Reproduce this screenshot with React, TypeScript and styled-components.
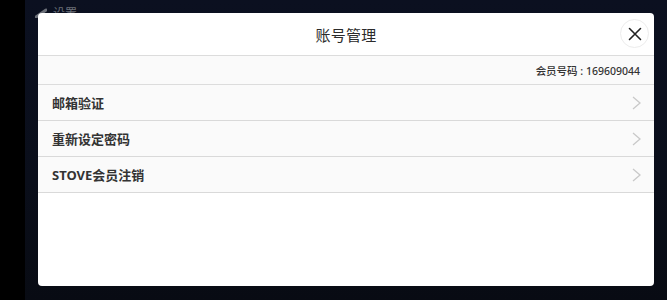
import React from 'react';
import styled, { createGlobalStyle } from 'styled-components';

const GlobalStyle = createGlobalStyle`
  html, body {
    margin: 0;
    padding: 0;
    background: #000;
  }
  body {
    font-family: "Noto Sans", "Noto Sans CJK SC", sans-serif;
  }
`;

const menuItems = ['邮箱验证', '重新设定密码', 'STOVE会员注销'];

const CloseIcon = () => (
    <svg width="14" height="14" viewBox="0 0 14 14">
        <path d="M1.5 1.5 L12.5 12.5 M12.5 1.5 L1.5 12.5" stroke="#222" strokeWidth="1.6" strokeLinecap="round" />
    </svg>
);

const Chevron = () => (
    <svg width="9" height="14" viewBox="0 0 9 14">
        <path d="M1 1 L8 7 L1 13" fill="none" stroke="#c9c9c9" strokeWidth="1.3" />
    </svg>
);

const BackIcon = () => (
    <svg width="12" height="10" viewBox="0 0 12 10">
        <path d="M1 9 L11 2" stroke="#6b6f78" strokeWidth="3" strokeLinecap="round" />
    </svg>
);

export default function App() {
    return (
        <Screen>
            <GlobalStyle />
            <SideStrip />
            <Stage>
                <BackBar>
                    <BackIcon />
                    <BackLabel>设置</BackLabel>
                </BackBar>
                <Dialog>
                    <DialogHeader>
                        <Title>账号管理</Title>
                        <CloseButton aria-label="close">
                            <CloseIcon />
                        </CloseButton>
                    </DialogHeader>
                    <MemberRow>会员号码 : 169609044</MemberRow>
                    {menuItems.map((item) => (
                        <MenuRow key={item}>
                            <MenuLabel>{item}</MenuLabel>
                            <Chevron />
                        </MenuRow>
                    ))}
                </Dialog>
            </Stage>
        </Screen>
    );
}

const Screen = styled.div`
  display: flex;
  width: 667px;
  height: 300px;
  overflow: hidden;
`;

const SideStrip = styled.div`
  width: 25px;
  flex-shrink: 0;
  background: #000;
`;

const Stage = styled.div`
  position: relative;
  flex: 1;
  background: linear-gradient(180deg, #0b1020 0%, #0a0e1a 60%, #080b13 100%);
`;

const BackBar = styled.div`
  display: flex;
  align-items: center;
  gap: 6px;
  padding: 4px 0 0 10px;
`;

const BackLabel = styled.span`
  font-size: 12px;
  color: #6b6f78;
`;

const Dialog = styled.div`
  position: absolute;
  top: 13px;
  left: 13px;
  width: 616px;
  height: 273px;
  background: #fff;
  border-radius: 4px;
  overflow: hidden;
  display: flex;
  flex-direction: column;
`;

const DialogHeader = styled.div`
  position: relative;
  height: 42px;
  display: flex;
  align-items: center;
  justify-content: center;
  border-bottom: 1px solid #dcdcdc;
`;

const Title = styled.h1`
  margin: 0;
  font-size: 15px;
  font-weight: 400;
  color: #2b2b2b;
  letter-spacing: 0.3px;
`;

const CloseButton = styled.button`
  position: absolute;
  right: 5px;
  top: 6px;
  width: 29px;
  height: 29px;
  border-radius: 50%;
  border: 1px solid #ececec;
  background: #fff;
  padding: 0;
  display: flex;
  align-items: center;
  justify-content: center;
`;

const MemberRow = styled.div`
  height: 28px;
  display: flex;
  align-items: center;
  justify-content: flex-end;
  padding: 0 14px;
  background: #fafafa;
  border-bottom: 1px solid #dcdcdc;
  font-size: 10.5px;
  font-weight: 500;
  color: #333;
`;

const MenuRow = styled.div`
  height: 35px;
  display: flex;
  align-items: center;
  justify-content: space-between;
  padding: 0 13px 0 14px;
  background: #fafafa;
  border-bottom: 1px solid #d9d9d9;
`;

const MenuLabel = styled.span`
  font-size: 13px;
  font-weight: 700;
  color: #333;
`;
